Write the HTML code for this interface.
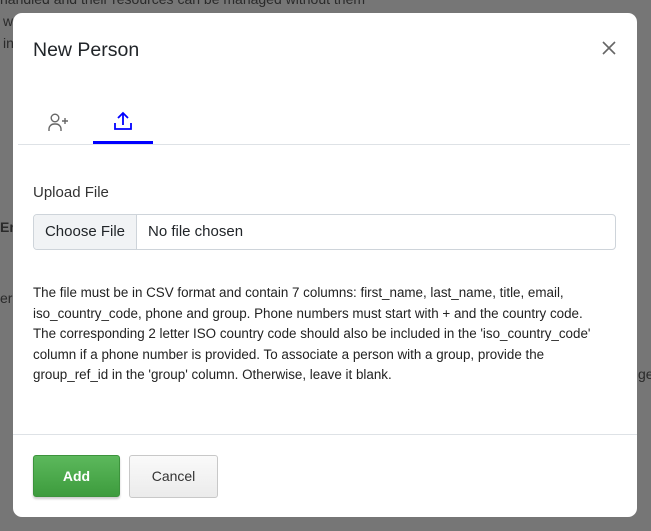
<!DOCTYPE html>
<html><head><style>
*{box-sizing:border-box;margin:0;padding:0}
body{width:651px;height:531px;background:#767676;font-family:"Liberation Sans",sans-serif;position:relative;overflow:hidden;color:#222}
.bg{position:absolute;color:#2a2a2a;font-size:14px}
.modal{position:absolute;left:13px;top:13px;width:624px;height:504px;background:#fff;border-radius:9px}
h1{position:absolute;left:20px;top:26px;font-size:19.5px;font-weight:normal;color:#212529}
.x{position:absolute;left:588px;top:27px}
.tabline{position:absolute;left:5px;top:131px;width:612px;height:1px;background:#dee2e6}
.act{position:absolute;left:80px;top:128px;width:60px;height:3px;background:#0000ff}
.lbl{position:absolute;left:20px;top:171px;font-size:15px;color:#333}
.file{position:absolute;left:20px;top:201px;width:583px;height:36px;border:1px solid #ced4da;border-radius:4px;font-size:15px;overflow:hidden}
.file .b{position:absolute;left:0;top:0;width:103px;height:34px;background:#f1f3f5;border-right:1px solid #ced4da;line-height:34px;text-align:center;color:#212529}
.file .t{position:absolute;left:114px;top:0;line-height:34px;color:#212529}
.desc{position:absolute;left:20px;top:270px;font-size:13.4px;line-height:20.5px;color:#222}
.desc div{white-space:nowrap}
.fline{position:absolute;left:0;top:421px;width:624px;height:1px;background:#dee2e6}
.add{position:absolute;left:20px;top:442px;width:87px;height:42px;background:linear-gradient(#5cb85c,#3d9c3d);border:1px solid #3c933c;border-radius:3px;color:#fff;font-weight:bold;font-size:14px;line-height:40px;text-align:center;box-shadow:0 2px 2px rgba(0,0,0,.2)}
.can{position:absolute;left:116px;top:442px;width:89px;height:43px;background:linear-gradient(#fafafa,#ebebeb);border:1px solid #c8c8c8;border-radius:3px;color:#333;font-size:14px;line-height:41px;text-align:center}
</style></head><body>
<div class="bg" style="left:0;top:-9px">handled and their resources can be managed without them</div>
<div class="bg" style="left:3px;top:13px">w</div>
<div class="bg" style="left:3px;top:35px">in</div>
<div class="bg" style="left:0;top:219px;font-weight:bold">En</div>
<div class="bg" style="left:0;top:290px">er</div>
<div class="bg" style="left:638px;top:366px">ge</div>
<div class="modal">
<h1>New Person</h1>
<svg class="x" width="16" height="16" viewBox="0 0 16 16"><path d="M2 2L14 14M14 2L2 14" stroke="#666" stroke-width="1.6"/></svg>
<svg style="position:absolute;left:35px;top:99px" width="22" height="20" viewBox="0 0 22 20"><circle cx="7" cy="6" r="3.8" fill="none" stroke="#666" stroke-width="1.4"/><path d="M1 19v-2a5 5 0 0 1 5-5h2a5 5 0 0 1 5 5v2" fill="none" stroke="#666" stroke-width="1.4"/><path d="M14 9h6M17 6v6" stroke="#666" stroke-width="1.4"/></svg>
<svg style="position:absolute;left:100px;top:98px" width="20" height="20" viewBox="0 0 20 20"><path d="M10 14V2M5 7l5-5 5 5" fill="none" stroke="#0000ff" stroke-width="1.8"/><path d="M2 12v6h16v-6" fill="none" stroke="#0000ff" stroke-width="1.8"/></svg>
<div class="act"></div>
<div class="tabline"></div>
<div class="lbl">Upload File</div>
<div class="file"><div class="b">Choose File</div><div class="t">No file chosen</div></div>
<div class="desc">
<div>The file must be in CSV format and contain 7 columns: first_name, last_name, title, email,</div>
<div>iso_country_code, phone and group. Phone numbers must start with + and the country code.</div>
<div>The corresponding 2 letter ISO country code should also be included in the 'iso_country_code'</div>
<div>column if a phone number is provided. To associate a person with a group, provide the</div>
<div>group_ref_id in the 'group' column. Otherwise, leave it blank.</div>
</div>
<div class="fline"></div>
<div class="add">Add</div>
<div class="can">Cancel</div>
</div>
</body></html>
